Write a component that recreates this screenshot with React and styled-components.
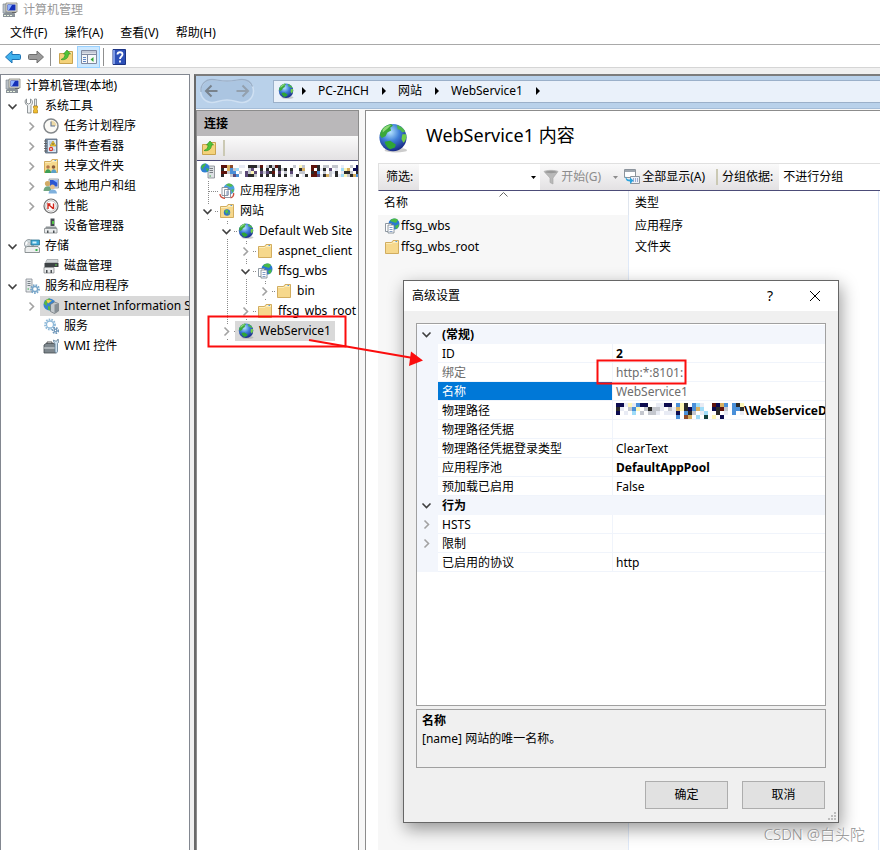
import React from "react";
import styled, { createGlobalStyle, css } from "styled-components";

const GlobalStyle = createGlobalStyle`
    * {
        box-sizing: border-box;
    }
    body {
        margin: 0;
        background: #f0f0f0;
        color: #000;
        font: 12px/20px "Noto Sans", "Noto Sans CJK SC", sans-serif;
    }
    button, input, select {
        font: inherit;
        color: inherit;
        margin: 0;
        padding: 0;
        border: 0;
        background: none;
    }
    svg {
        display: block;
        flex: none;
    }
`;

/* ---------- icons ---------- */

const Svg = ({ size = 16, box = 16, children }) => (
    <svg width={size} height={size} viewBox={`0 0 ${box} ${box}`} aria-hidden="true">
        {children}
    </svg>
);

const Globe = ({ size = 16 }) => (
    <Svg size={size} box={32}>
        <defs>
            <radialGradient id="sea" cx="0.4" cy="0.3" r="0.75">
                <stop offset="0" stopColor="#b5e4ff" />
                <stop offset="0.45" stopColor="#3f7fd8" />
                <stop offset="1" stopColor="#15247f" />
            </radialGradient>
        </defs>
        <ellipse cx="19" cy="29" rx="12" ry="2.5" fill="#999" opacity="0.5" />
        <circle cx="16" cy="15.5" r="14.5" fill="url(#sea)" />
        <path d="M2 13C3 6 8 2 14 1l2 2-3 2 1 3-4 2-2 4-4 2z" fill="#3aa83a" />
        <path d="M5 7c3-4 6-5 9-5l-4 4-5 4z" fill="#a5e58a" opacity="0.8" />
        <path d="M20 2c4 1 8 4 9 7l-3 1-3-3-2 0z" fill="#4fb84b" />
        <path d="M26 12l4 0c1 4-1 8-3 9l-2-4z" fill="#6fce4a" />
        <path d="M7 20l6-1 6 4-1 3-5 2c-3-1-5-4-6-8z" fill="#2fa535" />
    </Svg>
);

const Computer = () => (
    <Svg>
        <path d="M1 2h4v9H1z" fill="#b9c0c6" stroke="#7b858d" strokeWidth="0.6" />
        <path d="M4 1h11v9H4z" fill="#e5e5dc" stroke="#77776f" strokeWidth="0.7" />
        <path d="M5.5 2.500h8v6h-8z" fill="#1530b8" />
        <path d="M6 3h4l-3 5H6z" fill="#8fb2ff" />
        <path d="M1 12l3-2h8l1 2v3H1z" fill="#8a9298" />
        <path d="M2 13h2v1H2zM5 13h2v1H5zM8 13h2v1H8z" fill="#e9f3e0" />
        <path d="M10 10h4v1h-4z" fill="#666" />
    </Svg>
);

const Tools = () => (
    <Svg>
        <path d="M2.500 1v4l2 1 2-1V1c2.500 1 2.500 5 .5 6.500V15H3.500V7.500C.5 6 .5 2 2.500 1z" fill="#eef0f1" stroke="#777d82" strokeWidth="0.8" />
        <path d="M10.500 1h2v7h-2z" fill="#e4e8eb" stroke="#70757a" strokeWidth="0.7" />
        <path d="M9.500 8h4v2l-1 1 1 1v3h-4v-3l1-1-1-1z" fill="#f0bd2e" stroke="#a3740d" strokeWidth="0.6" />
    </Svg>
);

const Clock = () => (
    <Svg>
        <circle cx="8" cy="8" r="7" fill="#fbfaf6" stroke="#84888b" strokeWidth="1.500" />
        <path d="M8 8V2.500A5.500 5.500 0 0 1 13.500 8z" fill="#ecd9a7" />
        <path d="M8 3.500V8h4" fill="none" stroke="#5d7396" strokeWidth="1.100" />
    </Svg>
);

const EventLog = () => (
    <Svg>
        <path d="M2.500 1h11.500v14H2.500z" fill="#7f93a8" stroke="#56667a" strokeWidth="0.800" />
        <path d="M5 2h8v12H5z" fill="#dce9f6" />
        <path d="M6 4h3M6 6h2M6 12h6" stroke="#8aa5c8" strokeWidth="0.800" />
        <path d="M1 3h3M1 5.500h3M1 8h3M1 10.500h3M1 13h3" stroke="#5a5a5a" strokeWidth="0.900" />
        <path d="M10 3l3 5H7z" fill="#f7cf3a" stroke="#a8830e" strokeWidth="0.600" />
        <path d="M10 5v2" stroke="#333" strokeWidth="0.800" />
        <circle cx="8" cy="11" r="2.200" fill="#dd3a2c" />
        <path d="M7 10l2 2M9 10l-2 2" stroke="#fff" strokeWidth="0.600" />
    </Svg>
);

const Folder = ({ children }) => (
    <Svg>
        <path d="M1.500 3.500h6l1.500-2h5.500v13h-13z" fill="#f6d88c" stroke="#cda653" strokeWidth="0.900" />
        <path d="M9.500 2.500h4" stroke="#fdf3d2" />
        <path d="M11.500 2.500h1.500" stroke="#5b9ad5" />
        <path d="M2 4.500h6l1-1h5" fill="none" stroke="#fdeebd" strokeWidth="0.900" />
        {children}
    </Svg>
);

const SharedFolder = () => (
    <Folder>
        <circle cx="5" cy="9" r="1.800" fill="#b77b4c" />
        <path d="M2 15c0-5 6-5 6 0z" fill="#3f9f56" />
        <circle cx="10.500" cy="9" r="1.800" fill="#8a5a38" />
        <path d="M8 15c0-5 5.500-5 5.500 0z" fill="#5aa0c8" />
    </Folder>
);

const WebFolder = () => (
    <Folder>
        <circle cx="8" cy="9.500" r="3.200" fill="#2f73c9" />
        <path d="M5.500 8l3-1.500 1 2-2 2.500zM9 10l2-1-1 3z" fill="#55c04a" />
    </Folder>
);

const FolderUp = () => (
    <Svg>
        <path d="M1.500 4.500h7l1.500-2h4.500v12h-13z" fill="#f4d27a" stroke="#c39c43" strokeWidth="0.900" />
        <path d="M10 4h4" stroke="#fdf0c4" />
        <path d="M3 10.500c3-1 4-3 4-5.500H5.500L9 1l3.500 4h-2c0 4-3 6.500-7.500 5.500z" fill="#4fc337" stroke="#2c8f20" strokeWidth="0.600" />
    </Svg>
);

const Users = () => (
    <Svg>
        <path d="M6 1h9.500v9H6z" fill="#e1e5e8" stroke="#7d858b" strokeWidth="0.7" />
        <path d="M7 2h7.500v6.500H7z" fill="#2a55d2" />
        <path d="M10 2h4.500v3z" fill="#8eb5ff" />
        <circle cx="4.500" cy="5.500" r="2.600" fill="#d3ab66" />
        <path d="M0.500 13c0-6.500 8-6.500 8 0z" fill="#6fa580" />
        <circle cx="9.500" cy="9" r="2.400" fill="#e5c08c" />
        <path d="M5.500 15.500c0-5.500 8.500-5.500 8.500 0z" fill="#7fb0dd" />
    </Svg>
);

const Gauge = () => (
    <Svg>
        <circle cx="8" cy="8" r="7" fill="#fff" stroke="#6f6f6f" strokeWidth="1.200" />
        <circle cx="8" cy="8" r="5.300" fill="none" stroke="#a5a5a5" strokeWidth="0.700" />
        <path d="M5 11V6l5.500 5M5 6h2.500M10.500 11V5.500" fill="none" stroke="#d1281d" strokeWidth="1.400" />
    </Svg>
);

const Device = () => (
    <Svg>
        <path d="M7.500 0.500h4V8h-4z" fill="#444b50" />
        <path d="M9 3h2v3H9z" fill="#53c345" />
        <path d="M3 8.500h10l1 2H2z" fill="#8d9396" />
        <path d="M1.500 10.500h12.500v4.500H1.500z" fill="#e9ebec" stroke="#84898c" strokeWidth="0.800" />
        <path d="M4 12.500h1.500V15H4zM10 12.500h1.500V15H10z" fill="#4b5054" />
    </Svg>
);

const Storage = () => (
    <Svg>
        <circle cx="5" cy="6" r="4.500" fill="#d0dade" stroke="#80898e" strokeWidth="0.800" />
        <path d="M2 3l3 3-4 1z" fill="#fff" />
        <circle cx="5" cy="6" r="1.200" fill="#fff" stroke="#888" strokeWidth="0.500" />
        <path d="M7 2h8.500v5H7z" fill="#39a8d8" stroke="#31718d" strokeWidth="0.800" />
        <path d="M8.500 3.500h4v2h-4z" fill="#d4f0fa" />
        <path d="M1 10l2-1.500h11l1.500 1.500v4.500H1z" fill="#eceeee" stroke="#747b7e" strokeWidth="0.800" />
        <path d="M11.500 11h2v2h-2z" fill="#39b54a" />
    </Svg>
);

const Disk = () => (
    <Svg>
        <path d="M4 1.500h11v3H2.500z" fill="#d2d6d8" stroke="#8b9093" strokeWidth="0.600" />
        <path d="M1.500 5h14v4h-14z" fill="#3d4245" />
        <path d="M12 6.500h2v1h-2z" fill="#60d44e" />
        <path d="M1 9.500h10V15H1z" fill="#e9ebec" stroke="#85898c" strokeWidth="0.800" />
        <path d="M3 12h1.500v3H3zM7.500 12H9v3H7.500z" fill="#4b5054" />
    </Svg>
);

const Gear = ({ cx, cy, r, color = "#76a5c9" }) => (
    <g fill="none" stroke={color}>
        <circle cx={cx} cy={cy} r={r} strokeWidth="1.800" strokeDasharray="1.600 1.100" />
        <circle cx={cx} cy={cy} r={r - 1.500} strokeWidth="1.300" />
    </g>
);

const ServerGear = () => (
    <Svg>
        <path d="M2 1h6v13H2z" fill="#e3e7ea" stroke="#858c92" strokeWidth="0.800" />
        <path d="M3.500 3.500h3M3.500 5.500h3M3.500 7.500h3" stroke="#798188" />
        <path d="M3.500 11h1.500" stroke="#36ad43" />
        <Gear cx={11} cy={11} r={4} />
    </Svg>
);

const Gears = () => (
    <Svg>
        <Gear cx={7} cy={6.500} r={5} color="#8db8d8" />
        <Gear cx={12.500} cy={12.500} r={2.800} color="#7098ba" />
    </Svg>
);

const IisIcon = () => (
    <Svg>
        <circle cx="6.500" cy="6.500" r="6" fill="#3683cf" />
        <path d="M1 6c0-3 3-5.500 6-5.500L6 4 4 5v3zM5 8l4 1-2 3.500-2-1z" fill="#5ab642" />
        <path d="M3 1.500l6 1-4 3z" fill="#f1d54a" />
        <path d="M7.500 6.500l4-2.500 4 1.500V13l-4 2.500-4-2z" fill="#c3c8cc" stroke="#697075" strokeWidth="0.700" />
        <path d="M11.500 6.500v9l4-2.500V5.500z" fill="#868e94" />
    </Svg>
);

const Toolbox = () => (
    <Svg>
        <path d="M4 6V4h5v2" fill="none" stroke="#555" />
        <path d="M1 7l2-1.500h8L13 7v8H1z" fill="#7d868c" stroke="#454b50" strokeWidth="0.800" />
        <path d="M1 10h12" stroke="#dfe3e6" />
        <path d="M10.500 2c0 3 1 3 1.500 3.500V13c0 2.500 2.500 2.500 2.500 0V5.500C15.500 5 16 3 15 1l-1 2h-2z" fill="#cfe1ef" stroke="#5d7b93" strokeWidth="0.800" />
    </Svg>
);

const ServerGlobe = () => (
    <Svg>
        <path d="M8 3h6.500v12H8z" fill="#dde1e4" stroke="#81878c" strokeWidth="0.800" />
        <path d="M9.500 5.500H13M9.500 7.500H13M9.500 9.500H13" stroke="#787e83" />
        <path d="M9.500 13H11" stroke="#36ad43" />
        <circle cx="5" cy="5" r="4.500" fill="#2f7fd4" />
        <path d="M1 4c1-2 3-3.500 5-3.500L5 3 3 5v2zM6 5l3 1-2 3z" fill="#44b545" />
    </Svg>
);

const AppPool = () => (
    <Svg>
        <circle cx="10" cy="6" r="5.500" fill="#4b9fe0" />
        <path d="M7 2c2-2 5-2 7 1l-3 1zM12 7l3-1-1 4z" fill="#58bb4d" />
        <path d="M3 4.500h6v8H3zM5.500 6.500h6v8h-6z" fill="#fff" stroke="#75808b" strokeWidth="0.800" />
        <path d="M7 9h3M7 11h3" stroke="#7d94ba" />
        <path d="M1 11c0 3 2 4 5 4.500M14.500 10c.5 2-.5 4-3 5" fill="none" stroke="#c94c3c" strokeWidth="1.300" />
    </Svg>
);

const AppIcon = () => (
    <Svg>
        <circle cx="10" cy="6" r="5.500" fill="#2878d2" />
        <path d="M6 3c2-3 6-3 8-1l-2 3-3-1zM11 8l4-2-1 4-2 1z" fill="#4ab947" />
        <path d="M1.500 5.500h6v8h-6z" fill="#fff" stroke="#75808b" strokeWidth="0.800" />
        <path d="M4 7h6v8H4z" fill="#fff" stroke="#75808b" strokeWidth="0.800" />
        <path d="M5.500 9.500h3M5.500 11.500h3M5.500 13.500h3" stroke="#6484b8" strokeWidth="0.800" />
    </Svg>
);

const BlockArrow = ({ fill, stroke, flip }) => (
    <Svg>
        <path
            d="M0.500 8L7 2v3.500h7.500q1 0 1 1v3q0 1-1 1H7V14z"
            fill={fill}
            stroke={stroke}
            transform={flip ? "matrix(-1 0 0 1 16 0)" : undefined}
        />
    </Svg>
);

const PaneIcon = () => (
    <Svg>
        <path d="M0.500 1.500h15v13H.5z" fill="#f7f8fa" stroke="#8089a0" />
        <path d="M1 2h14v2.500H1z" fill="#c4c9d6" />
        <path d="M1 5.500h14" stroke="#8089a0" />
        <path d="M6.500 6v8.500" stroke="#8089a0" />
        <path d="M2 8.500h3M2 10.500h3M2 12.500h3" stroke="#5f86c4" />
        <path d="M12.500 8v5L9.500 10.500z" fill="#32a536" />
    </Svg>
);

const HelpIcon = () => (
    <Svg>
        <path d="M2 .5h12.500v15H2z" fill="#2d50b8" stroke="#1c3484" />
        <path d="M2 1h2v14H2z" fill="#7e9ae4" />
        <path d="M6.500 5.500c0-3 5-3 5 0 0 2-2.500 2-2.500 4.500M9 11.500v2" fill="none" stroke="#fff" strokeWidth="1.800" />
    </Svg>
);

const Funnel = () => (
    <Svg>
        <path d="M1 2.500c2-1.500 12-1.500 14 0L10 9v6l-3-1.500V9z" fill="#b9b9b9" stroke="#a2a2a2" strokeWidth="0.600" />
        <ellipse cx="8" cy="3" rx="6" ry="1.200" fill="#989898" />
    </Svg>
);

const ShowAllIcon = () => (
    <Svg>
        <path d="M0.500 0.500h11v8H.5z" fill="#fff" stroke="#8c949c" />
        <path d="M1 1h10v2H1z" fill="#9fa7b0" />
        <path d="M6.500 7.500h9v7h-9z" fill="#edf1f7" stroke="#8c949c" />
        <path d="M9 10h1M11 10h1M13 10h1M9 12h1M11 12h1M13 12h1" stroke="#4b66a8" />
        <path d="M2 7c0 3 2 3.500 4 3.500V8.500L9.500 11.500 6 15v-2.500C2 12.500 1 9.500 2 7z" fill="#2ba2dc" />
    </Svg>
);

const ThinArrow = ({ flip }) => (
    <Svg size={14} box={14}>
        <path
            d="M13.500 7H2M7.500 1.500L2 7l5.500 5.500"
            fill="none"
            stroke={flip ? "#93a0ae" : "#78828c"}
            strokeWidth="2"
            transform={flip ? "matrix(-1 0 0 1 14 0)" : undefined}
        />
    </Svg>
);

const Chevron = ({ open }) => (
    <Svg size={13} box={13}>
        <path
            d={open ? "M2.500 4.500l4 4 4-4" : "M4.500 2.500l4 4-4 4"}
            fill="none"
            stroke={open ? "#3f3f3f" : "#a2a2a2"}
            strokeWidth="1.600"
        />
    </Svg>
);

/* blocks that hide a name: one letter is one colour cell */
const cellColors = {
    k: "#2b2b2b", n: "#0c0c50", b: "#4a90d9", c: "#9fdcf8", y: "#fdf6b8", m: "#5e140c",
    o: "#d8b060", g: "#c4c7ce", t: "#11403c", w: "#e8ebf4", r: "#8e4a28", d: "#5c4a78",
};

const Mosaic = ({ rows, cell, label }) => (
    <svg width={rows[0].length * cell} height={rows.length * cell} role="img" aria-label={label} shapeRendering="crispEdges">
        {rows.map((row, y) =>
            [...row].map((c, x) =>
                cellColors[c] ? <rect key={x + "-" + y} x={x * cell} y={y * cell} width={cell} height={cell} fill={cellColors[c]} /> : null
            )
        )}
    </svg>
);

const hostCells = [
    "mmor..ww.kkkgm.gkgmk....g.yg..mmk.gg.gg.w..g.n",
    "k.obgc...gd..k.k.kwkgk.k..ko..m.kwk.d.w.cyo.nn",
    "mmgbb.g.dgyd.dgdkm.d.g.d..gg..kmb.g.gwk.wkkg.k",
    "k..gdb..dkkg.k.k.k.k.k.g.k.wk.mmdwkog.kwcygkob",
];

const pathCells = [
    "nnwywbnn..wwnn.byk.bcw..mnob.bky",
    "kw.gby.gkggw.gwoyknboc..nkmg.bbk",
    "n.w.c.g.ggw.wwwn.bkg.wc..k.w.b.w",
    "...............b.ro.c.t.y.n.....",
];

/* ---------- window chrome ---------- */

const Page = styled.div`
    position: relative;
    display: flex;
    flex-direction: column;
    min-height: 100vh;
    overflow: hidden;
    white-space: nowrap;
`;

const TitleBar = styled.header`
    display: flex;
    align-items: center;
    gap: 5px;
    height: 20px;
    padding-left: 2px;
    background: #fff;
    color: #999;
`;

const MenuBar = styled.nav`
    display: flex;
    align-items: center;
    gap: 17px;
    height: 25px;
    padding: 2px 0 0 10px;
    background: #fff;
    border-bottom: 1px solid #a9a9a9;
`;

const ToolBar = styled.div`
    display: flex;
    align-items: center;
    height: 23px;
    padding: 1px 0 0 1px;
    background: #fff;
    border-bottom: 1px solid #d5d5d5;
`;

const ToolButton = styled.button`
    display: flex;
    align-items: center;
    justify-content: center;
    width: 23px;
    height: 22px;
    border: 1px solid ${({ $on }) => ($on ? "#99d1ff" : "transparent")};
    background: ${({ $on }) => ($on ? "#cce8ff" : "transparent")};
`;

const Separator = styled.span`
    width: 1px;
    height: 18px;
    margin: 0 3px;
    background: #8f8f8f;
`;

const BarSeparator = styled.span`
    width: 2px;
    height: 16px;
    margin: 0 4px 0 ${({ $left = 3 }) => $left}px;
    background: #cbc9b4;
`;

const Workspace = styled.div`
    flex: 1;
    display: flex;
    gap: 4px;
    padding-top: 6px;
`;

/* ---------- trees ---------- */

const ConsolePane = styled.aside`
    width: 190px;
    flex: none;
    padding-top: 1px;
    background: #fff;
    border: 1px solid #828790;
    border-bottom: 0;
    overflow: hidden;
`;

const TreeList = styled.ul`
    list-style: none;
    margin: 0;
    padding: 0 0 0 ${({ $indent }) => $indent}px;
`;

const TreeRow = styled.li`
    display: flex;
    height: 20px;
`;

const dots = "#8a8a8a 0 1px, transparent 1px 2px";

const Slot = styled.span`
    display: flex;
    align-items: center;
    flex: none;
    width: 19px;
    height: 20px;
    ${({ $line }) => $line && css`
        background: repeating-linear-gradient(${dots}) 7px 0 / 1px 100% no-repeat;
    `}
    ${({ $branch }) => $branch && css`
        background:
            repeating-linear-gradient(${dots}) 7px 0 / 1px 100% no-repeat,
            repeating-linear-gradient(90deg, ${dots}) 8px 10px / 9px 1px no-repeat;
    `}
`;

const Twisty = styled.button`
    background: #fff;
`;

const NodeLabel = styled.button`
    display: flex;
    align-items: center;
    flex: none;
    gap: 5px;
    height: 20px;
    margin-left: -4px;
    padding: 0 4px 0 3px;
    background: ${({ $selected }) => ($selected ? "#d9d9d9" : "transparent")};
`;

const Tree = ({ nodes, indent, lines }) => (
    <TreeList $indent={indent}>
        {nodes.map(({ text, icon, level, open, guides = [], selected, cells }) => (
            <TreeRow key={text}>
                {Array.from({ length: Math.max(level - 1, 0) }, (_, i) => (
                    <Slot key={i} $line={guides.includes(i + 1)} />
                ))}
                {level > 0 && (
                    <Slot $branch={lines}>
                        {open !== undefined && (
                            <Twisty aria-label={open ? "Collapse" : "Expand"}>
                                <Chevron open={open} />
                            </Twisty>
                        )}
                    </Slot>
                )}
                <NodeLabel $selected={selected}>
                    {icon}
                    {cells ? <Mosaic rows={cells} cell={3} label={text} /> : text}
                </NodeLabel>
            </TreeRow>
        ))}
    </TreeList>
);

const consoleNodes = [
    { text: "计算机管理(本地)", icon: <Computer />, level: 0 },
    { text: "系统工具", icon: <Tools />, level: 1, open: true },
    { text: "任务计划程序", icon: <Clock />, level: 2, open: false },
    { text: "事件查看器", icon: <EventLog />, level: 2, open: false },
    { text: "共享文件夹", icon: <SharedFolder />, level: 2, open: false },
    { text: "本地用户和组", icon: <Users />, level: 2, open: false },
    { text: "性能", icon: <Gauge />, level: 2, open: false },
    { text: "设备管理器", icon: <Device />, level: 2 },
    { text: "存储", icon: <Storage />, level: 1, open: true },
    { text: "磁盘管理", icon: <Disk />, level: 2 },
    { text: "服务和应用程序", icon: <ServerGear />, level: 1, open: true },
    { text: "Internet Information Services", icon: <IisIcon />, level: 2, open: false, selected: true },
    { text: "服务", icon: <Gears />, level: 2 },
    { text: "WMI 控件", icon: <Toolbox />, level: 2 },
];

const siteNodes = [
    { text: "PC-ZHCH", icon: <ServerGlobe />, level: 0, cells: hostCells },
    { text: "应用程序池", icon: <AppPool />, level: 1 },
    { text: "网站", icon: <WebFolder />, level: 1, open: true },
    { text: "Default Web Site", icon: <Globe />, level: 2, open: true },
    { text: "aspnet_client", icon: <Folder />, level: 3, open: false, guides: [2] },
    { text: "ffsg_wbs", icon: <AppIcon />, level: 3, open: true, guides: [2] },
    { text: "bin", icon: <Folder />, level: 4, open: false, guides: [2, 3] },
    { text: "ffsg_wbs_root", icon: <Folder />, level: 3, open: false, guides: [2] },
    { text: "WebService1", icon: <Globe />, level: 2, open: false, selected: true },
];

/* ---------- IIS pane ---------- */

const IisPane = styled.main`
    flex: 1;
    min-width: 0;
    display: flex;
    flex-direction: column;
    background: #f7f7f7;
    border: solid #696969;
    border-width: 2px 0 0 2px;
    border-top-color: #7c7c7c;
`;

const AddressBar = styled.div`
    display: flex;
    align-items: center;
    height: 33px;
    padding: 0 0 2px 3px;
    background: #b9d1ea;
    border-bottom: 1px solid #a5bdd8;
`;

const NavButtons = styled.div`
    position: relative;
    display: flex;
    align-items: center;
    justify-content: space-between;
    width: 56px;
    height: 26px;
    padding: 0 5px;
    margin-right: 18px;
`;

const NavShape = styled.svg`
    position: absolute;
    inset: 0;
`;

const NavButton = styled.button`
    position: relative;
`;

const Crumbs = styled.nav`
    flex: 1;
    display: flex;
    align-items: center;
    gap: 12px;
    height: 23px;
    padding-left: 4px;
    background: #eaf1fa;
    border: 1px solid #9bb0c9;
    border-right: 0;
`;

const CrumbLink = styled.a`
    padding-right: 1px;
    color: #000;
    text-decoration: none;
`;

const CrumbRoot = styled.span`
    margin-right: -4px;
`;

const Triangle = () => (
    <svg width="4" height="8" viewBox="0 0 4 8" aria-hidden="true">
        <path d="M0 0l4 4-4 4z" fill="#000" />
    </svg>
);

const Panels = styled.div`
    flex: 1;
    display: flex;
    gap: 6px;
    padding: 1px 0 0 0;
`;

const Connections = styled.section`
    width: 163px;
    flex: none;
    background: #fff;
    border: 1px solid #8c8c8c;
    border-bottom: 0;
    overflow: hidden;
`;

const PanelTitle = styled.h2`
    height: 25px;
    margin: 0;
    padding-left: 7px;
    background: #bab8ba;
    font-size: 12px;
    line-height: 25px;
`;

const gradientBar = css`
    background: linear-gradient(#fafafa, #e3e1e3);
    border-bottom: 1px solid #4c4c78;
`;

const PanelTools = styled.div`
    ${gradientBar}
    display: flex;
    align-items: center;
    height: 25px;
`;

const Content = styled.section`
    flex: 1;
    min-width: 0;
    display: flex;
    flex-direction: column;
    padding-left: 12px;
    background: #fff;
    border: 1px solid #8c8c8c;
    border-width: 1px 0 0 1px;
`;

const Heading = styled.h1`
    display: flex;
    align-items: center;
    gap: 18px;
    height: 52px;
    margin: 0;
    padding-top: 2px;
    font-size: 18px;
    font-weight: 400;
    line-height: 24px;
`;

const HeadingText = styled.span`
    padding-bottom: 6px;
`;

const FilterBar = styled.div`
    ${gradientBar}
    display: flex;
    align-items: center;
    height: 28px;
    border-top: 1px solid #e0e0e0;
    border-left: 1px solid #e0e0e0;
`;

const FilterLabel = styled.label`
    padding: 0 6px 0 ${({ $left = 7 }) => $left}px;
`;

const Combo = styled.div`
    display: flex;
    align-items: center;
    width: 121px;
    height: 26px;
    padding-right: 4px;
    background: #fff;
`;

const FilterInput = styled.input`
    flex: 1;
    min-width: 0;
    height: 26px;
    outline: 0;
`;

const BarButton = styled.button`
    display: flex;
    align-items: center;
    gap: 2px;
    padding-left: ${({ $left = 0 }) => $left}px;
    color: ${({ $dim }) => ($dim ? "#8c8c8c" : "#000")};
`;

const GroupSelect = styled.select`
    flex: 1;
    min-width: 0;
    height: 26px;
    padding-left: 4px;
    background: #fff;
    appearance: none;
`;

const Drop = ({ color = "#000" }) => (
    <svg width="5" height="3" viewBox="0 0 5 3" aria-hidden="true">
        <path d="M0 0h5L2.500 3z" fill={color} />
    </svg>
);

const DropButton = styled.button`
    padding: 4px 6px 4px 12px;
`;

const ListArea = styled.div`
    flex: 1;
    margin-right: 1px;
    background: linear-gradient(90deg, #f7f7f7 250px, #dfe9f8 250px 251px, #fff 251px);
    border-right: 1px solid #dfe9f8;
`;

const FileTable = styled.table`
    width: 100%;
    table-layout: fixed;
    border-spacing: 0;
`;

const FileHead = styled.th`
    position: relative;
    width: ${({ $wide }) => ($wide ? "251px" : "auto")};
    height: 24px;
    padding: 0 6px;
    background: #fff;
    border-right: ${({ $wide }) => ($wide ? "1px solid #dfe5ee" : "0")};
    font-weight: 400;
    text-align: left;
`;

const SortMark = styled.svg`
    position: absolute;
    top: 1px;
    left: calc(50% - 4px);
`;

const FileCell = styled.td`
    height: 21px;
    padding: 0 6px;
`;

const FileName = styled.span`
    display: flex;
    align-items: center;
    gap: 1px;
    height: 21px;
`;

/* ---------- dialog ---------- */

const Dialog = styled.section`
    position: absolute;
    top: 280px;
    left: 403px;
    width: 436px;
    background: #f0f0f0;
    border: 1px solid #666;
    box-shadow: 2px 6px 16px rgba(0, 0, 0, 0.4);
`;

const DialogTitle = styled.header`
    display: flex;
    align-items: center;
    height: 30px;
    padding-left: 8px;
    background: #fff;
`;

const DialogName = styled.h2`
    flex: 1;
    margin: 0;
    font-size: 12px;
    font-weight: 400;
`;

const CaptionButton = styled.button`
    display: flex;
    align-items: center;
    justify-content: center;
    width: 45px;
    height: 30px;
    padding-right: 1px;
    font-size: 14px;
`;

const DialogBody = styled.div`
    display: flex;
    flex-direction: column;
    gap: 3px;
    padding: 12px 12px 13px;
`;

const PropertyBox = styled.div`
    min-height: 383px;
    padding-top: 1px;
    background: #fff;
    border: 1px solid #a0a0a0;
    overflow: hidden;
`;

const PropertyTable = styled.table`
    width: 100%;
    table-layout: fixed;
    border-spacing: 0;
    line-height: 16px;
`;

const Gutter = styled.td`
    height: 19px;
    padding: 0 0 0 3px;
    background: #f3f6fc;
`;

const GroupName = styled.th`
    padding: 2px 4px 1px;
    background: #f3f6fc;
    text-align: left;
`;

const PropName = styled.th`
    padding: 2px 4px 0;
    border: solid #f0f4fb;
    border-width: 0 1px 1px 0;
    font-weight: 400;
    text-align: left;
    color: ${({ $dim, $selected }) => ($selected ? "#fff" : $dim ? "#6d6d6d" : "#000")};
    background: ${({ $selected }) => ($selected ? "#0078d7" : "#fff")};
    background-clip: padding-box;
`;

const PropValue = styled.td`
    padding: 2px 3px 0;
    border-bottom: 1px solid #f0f4fb;
    font-weight: ${({ $bold }) => ($bold ? 700 : 400)};
    color: ${({ $dim }) => ($dim ? "#6d6d6d" : "#000")};
    overflow: hidden;
`;

const HiddenPath = styled.span`
    display: flex;
    align-items: center;
    height: 16px;
`;

const HelpBox = styled.div`
    height: 59px;
    padding: 2px 5px;
    border: 1px solid #a0a0a0;
    line-height: 18px;
`;

const HelpText = styled.p`
    margin: 0;
    font-weight: ${({ $bold }) => ($bold ? 700 : 400)};
`;

const DialogButtons = styled.div`
    display: flex;
    justify-content: flex-end;
    gap: 14px;
    padding: 10px 1px 0 0;
`;

const PushButton = styled.button`
    width: 83px;
    height: 28px;
    background: #e1e1e1;
    border: 1px solid #adadad;
`;

const Grip = styled.svg`
    position: absolute;
    right: 2px;
    bottom: 2px;
`;

const properties = [
    { group: "(常规)" },
    { name: "ID", value: "2", bold: true },
    { name: "绑定", value: "http:*:8101:", dim: true, dimName: true },
    { name: "名称", value: "WebService1", dim: true, selected: true },
    { name: "物理路径", value: "\\WebServiceD", bold: true, hidden: true },
    { name: "物理路径凭据", value: "" },
    { name: "物理路径凭据登录类型", value: "ClearText" },
    { name: "应用程序池", value: "DefaultAppPool", bold: true },
    { name: "预加载已启用", value: "False" },
    { group: "行为" },
    { name: "HSTS", value: "", expand: true },
    { name: "限制", value: "", expand: true },
    { name: "已启用的协议", value: "http" },
];

const SettingsDialog = () => (
    <Dialog role="dialog" aria-label="高级设置">
        <DialogTitle>
            <DialogName>高级设置</DialogName>
            <CaptionButton>?</CaptionButton>
            <CaptionButton aria-label="Close">
                <Svg size={12} box={12}>
                    <path d="M1 1l10 10M11 1L1 11" stroke="#000" strokeWidth="1" />
                </Svg>
            </CaptionButton>
        </DialogTitle>
        <DialogBody>
            <PropertyBox>
                <PropertyTable>
                    <colgroup>
                        <col width="21" />
                        <col width="175" />
                        <col />
                    </colgroup>
                    <tbody>
                        {properties.map((p) =>
                            p.group ? (
                                <tr key={p.group}>
                                    <Gutter><Chevron open /></Gutter>
                                    <GroupName colSpan={2}>{p.group}</GroupName>
                                </tr>
                            ) : (
                                <tr key={p.name}>
                                    <Gutter>{p.expand && <Chevron />}</Gutter>
                                    <PropName $dim={p.dimName} $selected={p.selected}>{p.name}</PropName>
                                    <PropValue $bold={p.bold} $dim={p.dim}>
                                        {p.hidden ? (
                                            <HiddenPath>
                                                <Mosaic rows={pathCells} cell={4} label="…" />
                                                {p.value}
                                            </HiddenPath>
                                        ) : p.value}
                                    </PropValue>
                                </tr>
                            )
                        )}
                    </tbody>
                </PropertyTable>
            </PropertyBox>
            <HelpBox>
                <HelpText $bold>名称</HelpText>
                <HelpText>[name] 网站的唯一名称。</HelpText>
            </HelpBox>
            <DialogButtons>
                <PushButton>确定</PushButton>
                <PushButton>取消</PushButton>
            </DialogButtons>
        </DialogBody>
        <Grip width="8" height="8" viewBox="0 0 8 8">
            <path d="M6 0h2v2H6zM3 3h2v2H3zM6 3h2v2H6zM0 6h2v2H0zM3 6h2v2H3zM6 6h2v2H6z" fill="#bdbdbd" />
        </Grip>
    </Dialog>
);

/* ---------- marks over the windows ---------- */

const Marks = styled.svg`
    position: absolute;
    top: 0;
    left: 0;
    pointer-events: none;
`;

const Watermark = styled.div`
    position: absolute;
    right: 15px;
    bottom: 6px;
    color: #8f8f8f;
    font-size: 15px;
    font-weight: 300;
    text-shadow: 1px 1px 0 #fff;
`;

export default () => (
    <>
        <GlobalStyle />
        <Page>
            <TitleBar><Computer />计算机管理</TitleBar>
            <MenuBar>
                <button>文件(F)</button>
                <button>操作(A)</button>
                <button>查看(V)</button>
                <button>帮助(H)</button>
            </MenuBar>
            <ToolBar>
                <ToolButton aria-label="Back"><BlockArrow fill="#3fb0ec" stroke="#1d72b4" /></ToolButton>
                <ToolButton aria-label="Forward"><BlockArrow fill="#9b9b9b" stroke="#6f6f6f" flip /></ToolButton>
                <Separator />
                <ToolButton aria-label="Up"><FolderUp /></ToolButton>
                <ToolButton aria-label="Show tree" $on><PaneIcon /></ToolButton>
                <Separator />
                <ToolButton aria-label="Help"><HelpIcon /></ToolButton>
            </ToolBar>
            <Workspace>
                <ConsolePane>
                    <Tree nodes={consoleNodes} indent={5} />
                </ConsolePane>
                <IisPane>
                    <AddressBar>
                        <NavButtons>
                            <NavShape width="56" height="26" viewBox="0 0 56 26">
                                <path
                                    d="M13 1.500C18 1.500 20 3 28 3s10-1.500 15-1.500a11.500 11.500 0 0 1 0 23C38 24.500 36 22 28 22s-10 2.500-15 2.500a11.500 11.500 0 0 1 0-23z"
                                    fill="#abc5e1"
                                    stroke="#cfe0f2"
                                    strokeWidth="1.500"
                                />
                                <path d="M2 14C1 6 7 1.500 13 1.500 18 1.500 20 3 28 3s10-1.500 15-1.500c5 0 9 3 10.500 7" fill="none" stroke="#9aafc8" strokeWidth="1.300" />
                            </NavShape>
                            <NavButton aria-label="Back"><ThinArrow /></NavButton>
                            <NavButton aria-label="Forward"><ThinArrow flip /></NavButton>
                        </NavButtons>
                        <Crumbs>
                            <CrumbRoot><Globe /></CrumbRoot>
                            <Triangle />
                            <CrumbLink href="#server">PC-ZHCH</CrumbLink>
                            <Triangle />
                            <CrumbLink href="#sites">网站</CrumbLink>
                            <Triangle />
                            <CrumbLink href="#site">WebService1</CrumbLink>
                            <Triangle />
                        </Crumbs>
                    </AddressBar>
                    <Panels>
                        <Connections>
                            <PanelTitle>连接</PanelTitle>
                            <PanelTools>
                                <ToolButton aria-label="Up"><FolderUp /></ToolButton>
                                <BarSeparator />
                            </PanelTools>
                            <Tree nodes={siteNodes} indent={4} lines />
                        </Connections>
                        <Content>
                            <Heading>
                                <Globe size={30} />
                                <HeadingText>WebService1 内容</HeadingText>
                            </Heading>
                            <FilterBar>
                                <FilterLabel htmlFor="filter">筛选:</FilterLabel>
                                <Combo>
                                    <FilterInput id="filter" type="text" />
                                    <Drop />
                                </Combo>
                                <BarButton $dim $left={3}><Funnel />开始(G)</BarButton>
                                <DropButton aria-label="More"><Drop color="#8c8c8c" /></DropButton>
                                <BarButton><ShowAllIcon />全部显示(A)</BarButton>
                                <BarSeparator $left={11} />
                                <FilterLabel htmlFor="group" $left={0}>分组依据:</FilterLabel>
                                <GroupSelect id="group">
                                    <option>不进行分组</option>
                                </GroupSelect>
                            </FilterBar>
                            <ListArea>
                                <FileTable>
                                    <thead>
                                        <tr>
                                            <FileHead $wide>
                                                名称
                                                <SortMark width="9" height="5" viewBox="0 0 9 5">
                                                    <path d="M.5 4.500l4-4 4 4" fill="none" stroke="#666" />
                                                </SortMark>
                                            </FileHead>
                                            <FileHead>类型</FileHead>
                                        </tr>
                                    </thead>
                                    <tbody>
                                        <tr>
                                            <FileCell><FileName><AppIcon />ffsg_wbs</FileName></FileCell>
                                            <FileCell>应用程序</FileCell>
                                        </tr>
                                        <tr>
                                            <FileCell><FileName><Folder />ffsg_wbs_root</FileName></FileCell>
                                            <FileCell>文件夹</FileCell>
                                        </tr>
                                    </tbody>
                                </FileTable>
                            </ListArea>
                        </Content>
                    </Panels>
                </IisPane>
            </Workspace>
            <SettingsDialog />
            <Marks width="700" height="400" viewBox="0 0 700 400">
                <g fill="none" stroke="#fb0d0d" strokeWidth="2">
                    <path d="M208.500 316.500h137v30h-137z" />
                    <path d="M597.500 360.500h88v23h-88z" />
                    <path d="M309 340l104 18" />
                </g>
                <path d="M411 351.500l12 9-14 5.500z" fill="#fb0d0d" />
            </Marks>
            <Watermark>CSDN @白头陀</Watermark>
        </Page>
    </>
);
